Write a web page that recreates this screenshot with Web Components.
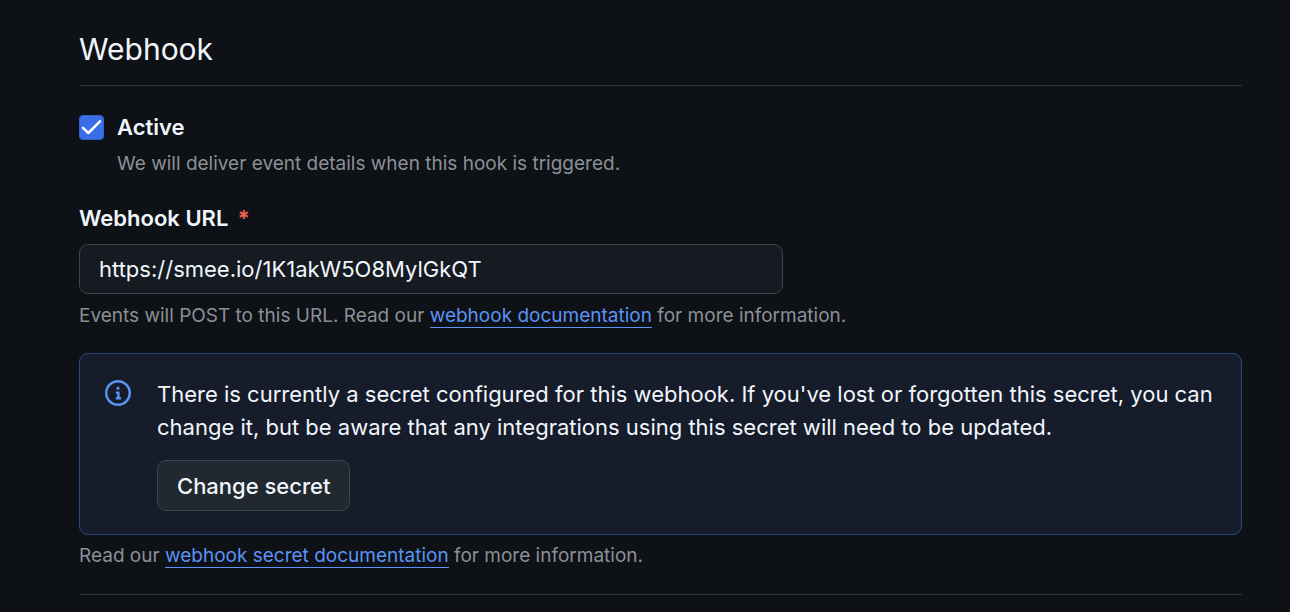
<!DOCTYPE html>
<html lang="en">
<head>
<meta charset="utf-8">
<meta name="viewport" content="width=device-width, initial-scale=1">
<title>Webhook</title>
<style>
  :root {
    --bg: #0e1116;
    --fg: #f0f6fc;
    --muted: #8b9097;
    --line: #2f353d;
    --accent: #5b93f5;
    --danger: #ec6052;
  }
  body {
    margin: 0;
    background: var(--bg);
    color: var(--fg);
    font-family: Inter, "Liberation Sans", sans-serif;
    font-size: 22px;
    line-height: 33px;
  }
</style>
</head>
<body>
<webhook-settings></webhook-settings>

<script>
  function define(name, html, setup) {
    const template = document.createElement('template');
    template.innerHTML = html;
    customElements.define(name, class extends HTMLElement {
      constructor() {
        super();
        this.attachShadow({ mode: 'open' }).append(template.content.cloneNode(true));
      }
      connectedCallback() {
        if (setup) setup(this, this.shadowRoot);
      }
    });
  }

  define('settings-heading', `
    <style>
      :host { display: block; padding-bottom: 16px; border-bottom: 1px solid var(--line); }
      h2 { margin: 0; font-size: 30px; line-height: 40px; font-weight: 425; }
    </style>
    <h2><slot></slot></h2>`);

  define('doc-link', `
    <style>
      :host { display: inline; }
      a { color: var(--accent); text-decoration: none; border-bottom: 1px solid var(--accent); }
    </style>
    <a href="#"><slot></slot></a>`);

  define('help-text', `
    <style>
      :host { display: block; color: var(--muted); font-size: 19px; line-height: 28px; font-weight: 425; }
    </style>
    <slot></slot>`);

  define('check-field', `
    <style>
      :host { display: grid; grid-template-columns: 25px 1fr; column-gap: 13px; row-gap: 6px; align-items: center; }
      input {
        appearance: none; box-sizing: border-box; width: 25px; height: 25px; margin: 0;
        border: 1px solid #3261cf; border-radius: 4px; background: #3a6ee8;
      }
      .box { display: grid; }
      .box > * { grid-area: 1 / 1; }
      svg { display: block; pointer-events: none; visibility: hidden; }
      input:checked + svg { visibility: visible; }
      label { font-weight: 600; }
      .note { grid-column: 2; }
    </style>
    <span class="box">
      <input type="checkbox" id="box" checked aria-describedby="note">
      <svg width="25" height="25" viewBox="0 0 25 25" fill="none" stroke="#fff" stroke-width="2.5" stroke-linecap="round" stroke-linejoin="round" aria-hidden="true"><path d="M4 12.8 9.3 18 21 6.4"/></svg>
    </span>
    <label for="box"><slot name="label"></slot></label>
    <div class="note" id="note"><slot></slot></div>`);

  define('url-field', `
    <style>
      :host { display: flex; flex-direction: column; gap: 8px; }
      label { display: flex; gap: 9px; padding-bottom: 2px; font-weight: 600; line-height: 32px; }
      .required { color: var(--danger); font-weight: 700; }
      input {
        box-sizing: border-box; width: 100%; max-width: 704px; height: 50px; padding: 0 19px;
        border: 1px solid #3d444d; border-radius: 9px; background: #161b22; color: var(--fg);
        font: inherit; outline: none;
      }
    </style>
    <label for="url"><slot name="label"></slot><span class="required" aria-hidden="true">*</span></label>
    <input id="url" type="text" required>
    <slot></slot>`,
    (host, root) => { root.querySelector('input').value = host.getAttribute('value') || ''; });

  define('plain-button', `
    <style>
      :host { display: block; }
      button {
        box-sizing: border-box; height: 51px; padding: 1px 19px 0; border: 1px solid #3d444d;
        border-radius: 9px; background: #212830; color: var(--fg);
        font: inherit; font-weight: 500; cursor: pointer;
      }
    </style>
    <button type="button"><slot></slot></button>`);

  define('info-banner', `
    <style>
      :host {
        display: flex; gap: 26px; align-items: flex-start; padding: 24px 25px 23px;
        border: 1px solid #294a7e; border-radius: 9px; background: #161c2a;
      }
      svg { display: block; flex: none; margin-top: 2px; fill: var(--accent); }
      .body { display: flex; flex-direction: column; gap: 16px; align-items: flex-start; flex: 1; min-width: 0; }
      p { margin: 0; }
    </style>
    <svg width="26" height="26" viewBox="0 0 16 16" aria-hidden="true"><path d="M0 8a8 8 0 1 1 16 0A8 8 0 0 1 0 8Zm8-6.5a6.5 6.5 0 1 0 0 13 6.5 6.5 0 0 0 0-13ZM6.5 7.75A.75.75 0 0 1 7.25 7h1a.75.75 0 0 1 .75.75v2.75h.25a.75.75 0 0 1 0 1.5h-2a.75.75 0 0 1 0-1.5h.25v-2h-.25a.75.75 0 0 1-.75-.75ZM8 6a1 1 0 1 1 0-2 1 1 0 0 1 0 2Z"/></svg>
    <div class="body"><p><slot></slot></p><slot name="action"></slot></div>`);

  define('webhook-settings', `
    <style>
      :host { display: block; padding: 29px 48px 17px 79px; }
      form { margin: 0; }
      check-field { margin-top: 25px; }
      url-field { margin-top: 24px; }
      info-banner { margin-top: 23px; }
      .after { margin-top: 7px; }
      hr { margin: 24px 0 0; border: 0; border-top: 1px solid var(--line); }
    </style>
    <form>
      <settings-heading>Webhook</settings-heading>
      <check-field>
        <span slot="label">Active</span>
        <help-text>We will deliver event details when this hook is triggered.</help-text>
      </check-field>
      <url-field value="https://smee.io/1K1akW5O8MylGkQT">
        <span slot="label">Webhook URL</span>
        <help-text>Events will POST to this URL. Read our <doc-link>webhook documentation</doc-link> for more information.</help-text>
      </url-field>
      <info-banner>
        There is currently a secret configured for this webhook. If you've lost or forgotten this secret, you can change it, but be aware that any integrations using this secret will need to be updated.
        <plain-button slot="action">Change secret</plain-button>
      </info-banner>
      <help-text class="after">Read our <doc-link>webhook secret documentation</doc-link> for more information.</help-text>
      <hr>
    </form>`);
</script>
</body>
</html>
